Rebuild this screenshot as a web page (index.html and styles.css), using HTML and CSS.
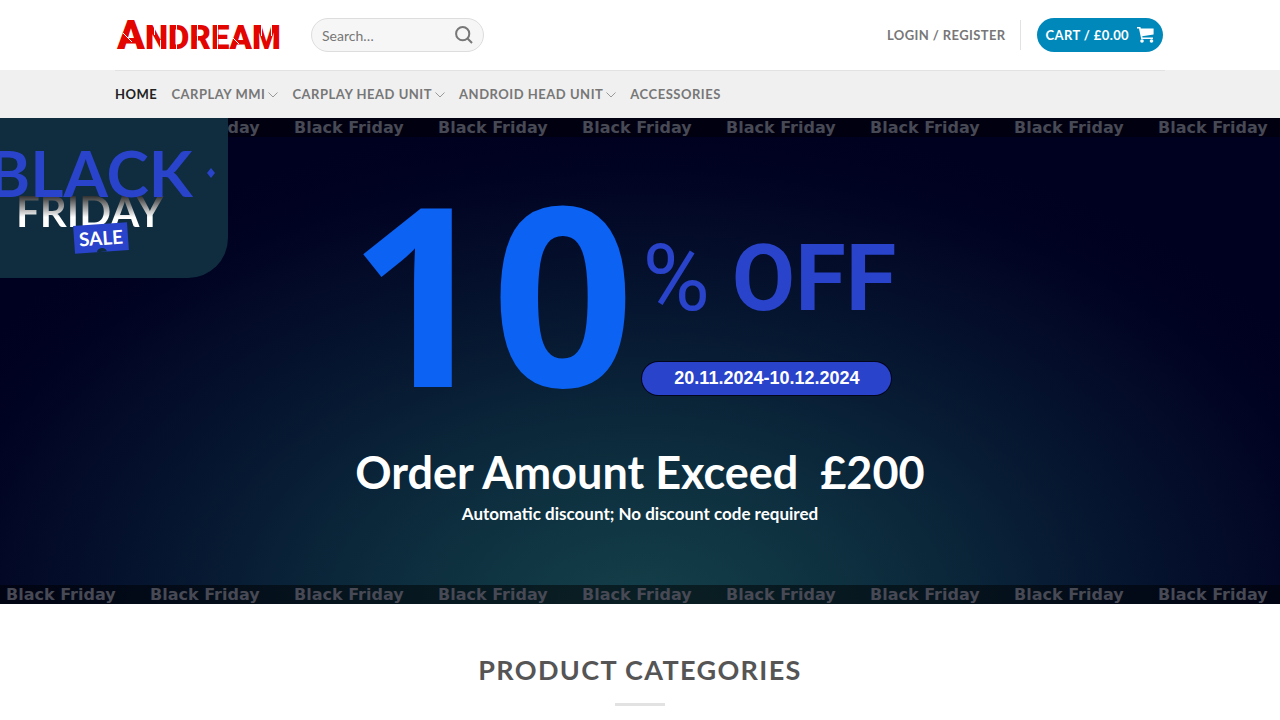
FILE: index.html
```html
<!DOCTYPE html>
<html lang="en">
<head>
<meta charset="utf-8">
<meta name="viewport" content="width=device-width, initial-scale=1">
<title>Andream</title>
<link rel="stylesheet" href="styles.css">
</head>
<body>
<header>
  <div class="container masthead">
    <a class="logo" href="#" aria-label="Andream home">
      <svg width="166" height="32" viewBox="0 0 166 32">
        <text class="logo-text" x="2" y="30"><tspan class="logo-initial">A</tspan>NDREAM</text>
        <g class="logo-cuts">
          <path d="M8 14 17 23M39.5 6V16M45.5 21V31M61.5 6V31M82.5 6V31M102.5 6V31M117 18 124 25M146.500 6V17M156.500 6V17"/>
        </g>
      </svg>
    </a>
    <form class="search" role="search">
      <input class="search-input" type="search" placeholder="Search…" aria-label="Search">
      <button class="search-button" type="button" aria-label="Submit search">
        <svg width="18" height="18" viewBox="0 0 18 18"><circle cx="7.7" cy="7.7" r="6.6"/><path d="M12.3 12.3 17 17"/></svg>
      </button>
    </form>
    <a class="login" href="#">Login / Register</a>
    <a class="cart" href="#">
      <span>Cart / £0.00</span>
      <svg width="17" height="16" viewBox="0 0 17 16"><path d="M0 0H3.4L3.8 1.4H16.6V7.5L5.2 9.2 5.5 10.5H16V12H4.2L2 1.5H0Z"/><circle cx="5" cy="14" r="1.8"/><circle cx="14.5" cy="14" r="1.8"/></svg>
    </a>
  </div>
  <nav class="navbar" aria-label="Main">
    <div class="container">
      <ul class="menu">
        <li><a class="active" href="#">Home</a></li>
        <li><a href="#">Carplay MMI<svg class="caret" width="10" height="6" viewBox="0 0 10 6"><path d="M.5 .5 5 5 9.5 .5"/></svg></a></li>
        <li><a href="#">Carplay Head Unit<svg class="caret" width="10" height="6" viewBox="0 0 10 6"><path d="M.5 .5 5 5 9.5 .5"/></svg></a></li>
        <li><a href="#">Android Head Unit<svg class="caret" width="10" height="6" viewBox="0 0 10 6"><path d="M.5 .5 5 5 9.5 .5"/></svg></a></li>
        <li><a href="#">Accessories</a></li>
      </ul>
    </div>
  </nav>
</header>
<main>
  <section class="banner">
    <div class="strip"><span>Black Friday</span><span>Black Friday</span><span>Black Friday</span><span>Black Friday</span><span>Black Friday</span><span>Black Friday</span><span>Black Friday</span><span>Black Friday</span><span>Black Friday</span></div>
    <div class="badge">
      <div class="badge-black">BLACK<svg class="diamond" width="8" height="10" viewBox="0 0 8 10"><path d="M4 0 8 5 4 10 0 5Z"/></svg></div>
      <div class="badge-friday">FRIDAY</div>
      <div class="badge-sale">SALE<svg class="notch" width="10" height="4" viewBox="0 0 10 4"><path d="M0 4A5 4 0 0 1 10 4Z"/></svg></div>
    </div>
    <div class="offer">
      <div class="offer-row">
        <span class="amount">10</span>
        <div class="offer-side">
          <div class="off"><span class="percent">%</span><span>OFF</span></div>
          <div class="dates">20.11.2024-10.12.2024</div>
        </div>
      </div>
      <h1 class="headline">Order Amount Exceed &nbsp;£200</h1>
      <p class="note">Automatic discount; No discount code required</p>
    </div>
    <div class="strip"><span>Black Friday</span><span>Black Friday</span><span>Black Friday</span><span>Black Friday</span><span>Black Friday</span><span>Black Friday</span><span>Black Friday</span><span>Black Friday</span><span>Black Friday</span></div>
  </section>
  <section class="categories">
    <h2 class="section-title">Product Categories</h2>
    <div class="divider"></div>
  </section>
</main>
</body>
</html>
```
FILE: styles.css
```css
* { box-sizing: border-box; }
body { margin: 0; font-family: Lato, sans-serif; color: #777; background: #fff; overflow-x: hidden; }
a { color: inherit; text-decoration: none; }
.container { max-width: 1050px; margin: 0 auto; }

.masthead { display: flex; align-items: center; height: 70px; }
.logo { display: flex; margin-right: 30px; }
.logo svg { overflow: visible; }
.logo-text { font-family: Roboto, sans-serif; font-weight: 900; font-size: 33px; fill: #e20500; }
.logo-initial { font-size: 41px; }
.logo-cuts { fill: none; stroke: #fff; stroke-width: 1; }

.search { display: flex; align-items: center; width: 173px; height: 34px; padding: 0 10px; border: 1px solid #ddd; border-radius: 17px; background: #f6f6f6; }
.search-input { flex: 1; min-width: 0; padding: 0; border: 0; outline: 0; background: none; font: 14px Lato, sans-serif; color: #777; }
.search-input::placeholder { color: #777; }
.search-button { display: flex; padding: 0; border: 0; background: none; }
.search-button svg { fill: none; stroke: #777; stroke-width: 2; }

.login { margin-left: auto; padding-right: 14px; border-right: 1px solid #e2e2e2; line-height: 30px; font-size: 13px; font-weight: 700; letter-spacing: .03em; text-transform: uppercase; }
.cart { display: flex; align-items: center; gap: 8px; height: 34px; margin: 0 2px 0 16px; padding: 0 9px; border-radius: 17px; background: #0088bb; color: #fff; font-size: 13px; font-weight: 700; letter-spacing: .03em; text-transform: uppercase; }
.cart svg { fill: #fff; }

.navbar { background: #f0f0f0; }
.navbar .container { border-top: 1px solid #e2e2e2; }
.menu { display: flex; flex-wrap: wrap; gap: 0 14px; margin: 0; padding: 0; list-style: none; font-size: 13px; font-weight: 700; letter-spacing: .04em; text-transform: uppercase; line-height: 47px; }
.menu a { display: flex; align-items: center; gap: 3px; }
.menu .active { color: #222; }
.caret { fill: none; stroke: #999; stroke-width: 1; }

.banner { position: relative; overflow: hidden; background: radial-gradient(ellipse 62% 104% at 50% 102%, #14404a 0%, #0d2e3e 30%, #061630 60%, #010322 88%, #000020 100%); }
.strip { display: flex; height: 19px; padding-left: 6px; background: rgba(0, 0, 0, .5); color: #474955; overflow: hidden; font: 700 16px/19px "DejaVu Sans", sans-serif; }
.strip span { flex: 0 0 144px; }

.badge { position: absolute; top: 0; left: 0; width: 228px; height: 160px; padding-top: 26px; border-radius: 0 0 40px 0; background: #0f2d3e; font-weight: 700; }
.badge-black { position: relative; z-index: 1; display: flex; align-items: center; margin-left: -12px; line-height: 58px; font-size: 64px; color: #2943ca; }
.diamond { margin-left: 14px; fill: #2943ca; }
.badge-friday { margin: -12px 0 0 16px; width: 150px; line-height: 42px; font-size: 42px; color: transparent; background: linear-gradient(#333 15%, #fff 65%); background-clip: text; -webkit-background-clip: text; }
.badge-sale { position: relative; width: 54px; height: 28px; margin: -8px 0 0 74px; background: #2943ca; color: #fff; font-size: 19px; line-height: 28px; text-align: center; transform: rotate(-4deg); }
.notch { position: absolute; left: 22px; bottom: 0; fill: #0f2d3e; }

.offer { display: flex; flex-direction: column; align-items: center; height: 448px; color: #fff; white-space: nowrap; }
.offer-row { display: flex; gap: 8px; margin-right: 40px; padding-top: 53px; }
.amount { font: 700 250px/200px "Open Sans", sans-serif; color: #0b62f3; }
.offer-side { display: flex; flex-direction: column; justify-content: space-between; width: 249px; height: 205px; }
.off { display: flex; gap: 22px; font: 700 92px/178px Roboto, sans-serif; height: 172px; color: #2943ca; }
.percent { font-weight: 400; }
.dates { border-radius: 17px; background: #2943ca; box-shadow: 0 0 0 1px #02051c; text-align: center; font: 700 18px/33px "Liberation Sans", sans-serif; }
.headline { margin: 47px 0 0; font-size: 45px; line-height: 60px; font-weight: 700; }
.note { margin: 0; font-size: 17px; font-weight: 700; line-height: 24px; }

.categories { display: flex; flex-direction: column; align-items: center; padding: 48px 16px 14px; }
.section-title { margin: 0; font-size: 27px; line-height: 36px; font-weight: 700; letter-spacing: .05em; text-transform: uppercase; color: #555; }
.divider { width: 50px; height: 3px; margin-top: 15px; background: #e2e2e2; }
```
